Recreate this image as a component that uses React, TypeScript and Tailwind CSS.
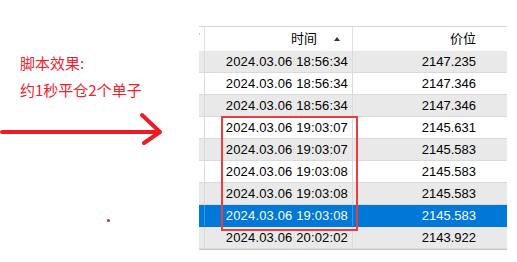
const ROWS = [
  { time: '2024.03.06 18:56:34', price: '2147.235' },
  { time: '2024.03.06 18:56:34', price: '2147.346' },
  { time: '2024.03.06 18:56:34', price: '2147.346' },
  { time: '2024.03.06 19:03:07', price: '2145.631' },
  { time: '2024.03.06 19:03:07', price: '2145.583' },
  { time: '2024.03.06 19:03:08', price: '2145.583' },
  { time: '2024.03.06 19:03:08', price: '2145.583' },
  { time: '2024.03.06 19:03:08', price: '2145.583', selected: true },
  { time: '2024.03.06 20:02:02', price: '2143.922' },
];

export default function App() {
  return (
    <div className="relative w-[517px] h-[262px] bg-white overflow-hidden flex">
      {/* note on the left */}
      <div className="w-[199px] shrink-0 pt-[49px] pl-[20px] text-[15px] leading-[27px] text-[#f5202c] font-['Noto_Sans_CJK_SC',sans-serif]">
        <div>脚本效果:</div>
        <div>约1秒平仓2个单子</div>
      </div>

      {/* trade table */}
      <div className="w-[308px] shrink-0 pt-[26px] font-['Liberation_Sans','Noto_Sans_CJK_SC',sans-serif] text-[13px] text-black">
        <div className="border-t border-[#d4d4d4] grid grid-cols-[5px_148px_155px] h-[25px] bg-white">
          <div className="relative">
            <span className="absolute left-0 top-[6px] w-[1px] h-[2px] bg-[#7fe0e8]" />
          </div>
          <div className="border-l border-[#e0e0e0] flex items-center justify-end pr-[12px] gap-[17px]">
            <span>时间</span>
            <svg width="6" height="4" viewBox="0 0 6 4" className="mt-[-1px]">
              <path d="M0 4 L3 0 L6 4 Z" fill="#333" />
            </svg>
          </div>
          <div className="border-l border-[#e0e0e0] flex items-center justify-end pr-[31px]">
            价位
          </div>
        </div>
        {ROWS.map((r, i) => (
          <div
            key={i}
            className={`grid grid-cols-[5px_148px_155px] h-[22px] border-b ${
              r.selected
                ? 'bg-[#0078d7] text-white border-[#0078d7]'
                : i % 2 === 0
                ? 'bg-[#e9e9e9] border-[#dadada]'
                : 'bg-white border-[#dadada]'
            }`}
          >
            <div />
            <div className={`border-l flex items-center justify-end pr-[4px] tracking-[0.15px] ${r.selected ? 'border-[#3b96df]' : 'border-[#dadada]'}`}>
              {r.time}
            </div>
            <div className={`border-l flex items-center justify-end pr-[31px] ${r.selected ? 'border-[#3b96df]' : 'border-[#dadada]'}`}>
              {r.price}
            </div>
          </div>
        ))}
        <div className="h-[1px] bg-[#c8c8c8]" />
      </div>

      {/* red highlight box */}
      <div className="absolute left-[221px] top-[116px] w-[137px] h-[115px] border-2 border-[#ef3b3b]" />

      {/* hand-drawn arrow */}
      <svg className="absolute left-0 top-[110px]" width="166" height="40" viewBox="0 0 166 40">
        <path
          d="M2 22 L159 22 M142 5 L160 22 L144 33"
          stroke="#ed1c24"
          strokeWidth="4"
          strokeLinecap="round"
          strokeLinejoin="round"
          fill="none"
        />
      </svg>
      <span className="absolute left-[107px] top-[219px] w-[3px] h-[3px] rounded-full bg-[#ed1c24]" />
    </div>
  );
}
